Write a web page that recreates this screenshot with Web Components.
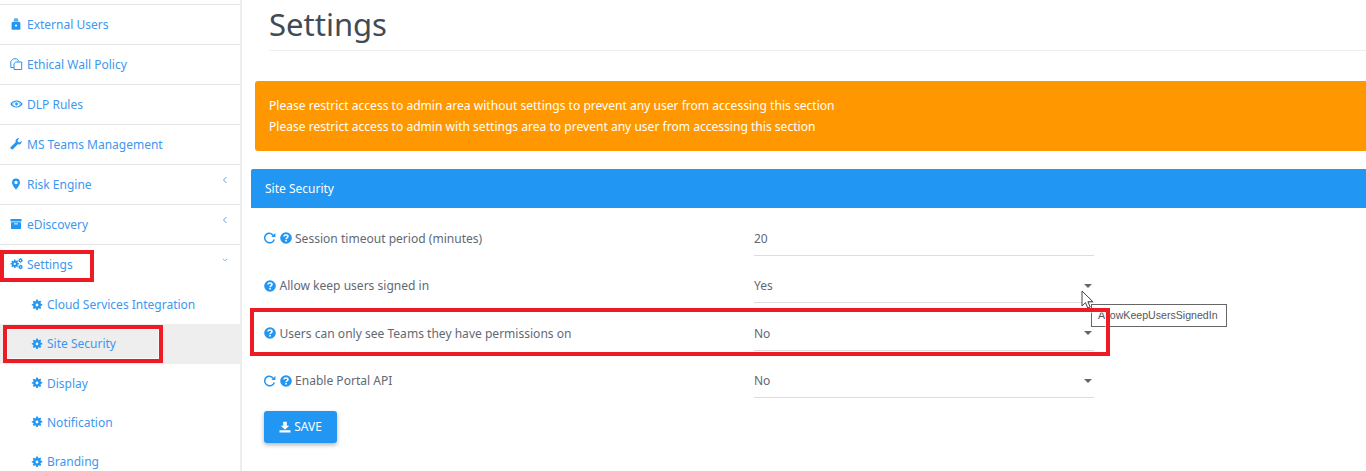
<!DOCTYPE html>
<html><head><meta charset="utf-8">
<style>
html,body{margin:0;padding:0;background:#fff}
body{width:1366px;height:471px;overflow:hidden;font-family:"Noto Sans","Open Sans",sans-serif;font-size:12px;position:relative}
</style></head><body>
<admin-page>
  <side-nav slot="nav">
    <nav-item icon="user">External Users</nav-item>
    <nav-item icon="copy">Ethical Wall Policy</nav-item>
    <nav-item icon="eye">DLP Rules</nav-item>
    <nav-item icon="wrench">MS Teams Management</nav-item>
    <nav-item icon="pin" chevron="left">Risk Engine</nav-item>
    <nav-item icon="archive" chevron="left">eDiscovery</nav-item>
    <nav-item icon="gears" chevron="down" open>Settings</nav-item>
    <nav-sub>Cloud Services Integration</nav-sub>
    <nav-sub active>Site Security</nav-sub>
    <nav-sub>Display</nav-sub>
    <nav-sub>Notification</nav-sub>
    <nav-sub>Branding</nav-sub>
  </side-nav>
  <page-title slot="main">Settings</page-title>
  <warn-box slot="main">
    <div>Please restrict access to admin area without settings to prevent any user from accessing this section</div>
    <div>Please restrict access to admin with settings area to prevent any user from accessing this section</div>
  </warn-box>
  <set-panel slot="main" heading="Site Security">
    <set-row reset value="20">Session timeout period (minutes)</set-row>
    <set-row select value="Yes">Allow keep users signed in</set-row>
    <set-row select value="No">Users can only see Teams they have permissions on</set-row>
    <set-row reset select value="No">Enable Portal API</set-row>
    <save-btn>SAVE</save-btn>
  </set-panel>
</admin-page>
<hover-tip>AllowKeepUsersSignedIn</hover-tip>
<red-box style="left:0;top:250px;width:94px;height:32px"></red-box>
<red-box style="left:3px;top:325px;width:160px;height:38px"></red-box>
<red-box style="left:250px;top:308px;width:860px;height:48px"></red-box>
<script>
const BLUE='#2196f3';
const GEAR='M7.800 .8h2.400l.4 2.100 1.300.5 1.800-1.200 1.700 1.700-1.200 1.800.5 1.300 2.100.4v2.400l-2.100.4-.5 1.300 1.200 1.800-1.700 1.700-1.800-1.200-1.300.5-.4 2.100H7.800l-.4-2.100-1.300-.5-1.800 1.200-1.700-1.700 1.200-1.800-.5-1.300-2.100-.4V7.800l2.100-.4.5-1.300-1.200-1.800 1.700-1.700 1.800 1.200 1.300-.5zM9 6.900a2.100 2.100 0 100 4.200 2.100 2.100 0 000-4.200z';
const ICONS={
 user:`<svg width="12" height="12" viewBox="0 0 12 12"><path fill="${BLUE}" d="M4 .4h4v1.300H4zM3.600 2.300h4.800v1.300H3.600zM1.600 5.200c0-.8.6-1.200 1.200-1.200h6.400c.6 0 1.200.4 1.200 1.200V11c0 .5-.3.8-.8.8H2.400c-.5 0-.8-.3-.8-.8z"/><circle cx="6" cy="7.600" r="1.100" fill="#fff"/></svg>`,
 copy:`<svg width="13" height="13" viewBox="0 0 13 13" fill="none" stroke="${BLUE}" stroke-width="1"><path d="M3.500.8h3.200l1.500 1.500v1.400M3.500.8L.8 3.500v6h3"/><path d="M5.800 4h5.900v7.500H4V5.600z"/></svg>`,
 eye:`<svg width="13" height="12" viewBox="0 0 13 12"><path fill="${BLUE}" fill-rule="evenodd" d="M.3 6C1.600 3.800 3.800 2.500 6.500 2.500S11.400 3.800 12.700 6C11.400 8.200 9.200 9.500 6.500 9.500S1.600 8.200.3 6zM6.500 3.400a2.600 2.600 0 100 5.200 2.600 2.600 0 000-5.200zM2.100 6c.8 1 1.500 1.600 2.300 2A3.400 3.400 0 014 4.100C3.200 4.500 2.700 5.100 2.100 6zM9 4.100A3.400 3.400 0 018.600 8c.8-.4 1.500-1 2.300-2-.6-.9-1.100-1.500-1.900-1.900z"/><circle cx="6.500" cy="6" r="1.400" fill="${BLUE}"/></svg>`,
 wrench:`<svg width="12" height="12" viewBox="0 0 12 12"><path fill="${BLUE}" d="M11.600 2.700c.2 1.400-.2 2.500-1.100 3.200-.8.600-1.800.7-2.700.4L3.200 11.100c-.6.600-1.500.6-2.100 0l-.2-.2c-.6-.6-.6-1.500 0-2.100l4.800-4.600c-.3-.9-.2-1.900.4-2.700C6.900.6 8 .2 9.300.4L7.500 2.300l.4 1.800 1.800.4z"/></svg>`,
 pin:`<svg width="12" height="12" viewBox="0 0 12 12"><path fill="${BLUE}" fill-rule="evenodd" d="M6 .5a3.900 3.900 0 00-3.900 3.900c0 2.300 2.700 5.800 3.900 7.200 1.200-1.400 3.900-4.900 3.900-7.200A3.900 3.900 0 006 .5zm0 2.300a1.700 1.700 0 110 3.400 1.700 1.700 0 010-3.400z"/></svg>`,
 archive:`<svg width="12" height="12" viewBox="0 0 12 12"><path fill="${BLUE}" d="M.5 1h11v2.500H.5zM1 4.200h10V11H1z"/><rect x="4.200" y="5.400" width="3.600" height="1" fill="#fff"/></svg>`,
 gears:`<svg width="14" height="12" viewBox="0 0 14 12"><g transform="translate(0 1.200) scale(.53)"><path fill="${BLUE}" fill-rule="evenodd" d="${GEAR}"/></g><g transform="translate(7.800 -.2) scale(.3)"><path fill="${BLUE}" fill-rule="evenodd" d="${GEAR}"/></g><g transform="translate(7.800 6.400) scale(.3)"><path fill="${BLUE}" fill-rule="evenodd" d="${GEAR}"/></g></svg>`,
 gear:`<svg width="12" height="12" viewBox="0 0 18 18"><path fill="${BLUE}" fill-rule="evenodd" d="${GEAR}"/></svg>`,
 help:`<svg width="12" height="12" viewBox="0 0 12 12"><circle cx="6" cy="6" r="5.800" fill="${BLUE}"/><path fill="none" stroke="#fff" stroke-width="1.500" d="M4 4.600C4 3.500 4.900 3 6 3s2 .6 2 1.600c0 1.300-2 1.300-2 2.600"/><rect x="5.200" y="8" width="1.600" height="1.500" fill="#fff"/></svg>`,
 reset:`<svg width="12" height="12" viewBox="0 0 12 12"><path fill="none" stroke="${BLUE}" stroke-width="1.500" d="M10.300 7.500A4.600 4.600 0 111 4.200a4.600 4.600 0 018.300-.6"/><path fill="${BLUE}" d="M11.400.9v4H7.400z"/></svg>`,
 save:`<svg width="12" height="12" viewBox="0 0 12 12"><path fill="#fff" d="M4.200.8h3.600v4h2.400L6 8.800 1.800 4.800h2.400zM.5 9.300h11v2.200H.5z"/></svg>`
};
function def(name,css,html,init){
  customElements.define(name,class extends HTMLElement{
    constructor(){super();this.attachShadow({mode:'open'})}
    connectedCallback(){this.shadowRoot.innerHTML=`<style>${css}</style>`+(typeof html==='function'?html(this):html);if(init)init(this)}
  });
}
def('admin-page',`:host{display:flex;width:1366px;height:471px;overflow:hidden}
.nav{flex:0 0 242px;display:block}.main{flex:1;min-width:0;display:flex;flex-direction:column}`,
`<div class="nav"><slot name="nav"></slot></div><div class="main"><slot name="main"></slot></div>`);
def('side-nav',`:host{display:flex;flex-direction:column;width:242px;height:471px;box-sizing:border-box;border-right:2px solid #eeeeee;padding-top:4px;overflow:hidden}`,`<slot></slot>`);
def('nav-item',`:host{display:flex;align-items:center;height:40px;box-sizing:border-box;flex:none;border-top:1px solid #e5e5e5;padding:0 11px 1px 10px;color:#3d97ef;font-size:12px}
:host([open]){height:41px;padding-bottom:2px}
.i{width:17px;display:flex;align-items:center;flex:none}.t{flex:1}
.c{width:6px;height:10px;display:flex;margin-top:-9px;margin-right:1px}`,
el=>{const ch=el.getAttribute('chevron');
 const c=ch==='left'?`<svg width="6" height="10" viewBox="0 0 6 10"><path d="M4.500 2L1.500 5l3 3" fill="none" stroke="#5aa6ef"/></svg>`:ch==='down'?`<svg width="8" height="10" viewBox="0 0 8 10"><path d="M1 3.500l3 2.500 3-2.500" fill="none" stroke="#5aa6ef"/></svg>`:'';
 return `<span class="i">${ICONS[el.getAttribute('icon')]}</span><span class="t"><slot></slot></span>${c?`<span class="c">${c}</span>`:''}`});
def('nav-sub',`:host{display:flex;align-items:center;height:39.250px;flex:none;box-sizing:border-box;padding-left:31px;color:#3d97ef;font-size:12px}
:host([active]){background:#eeeeee}.i{width:16px;display:flex;flex:none;margin-left:-.5px;margin-right:.5px}`,
()=>`<span class="i">${ICONS.gear}</span><slot></slot>`);
def('page-title',`:host{display:block;margin:0 0 30px 27px;height:51px;box-sizing:border-box;border-bottom:1px solid #eeeeee;flex:none}
h1{margin:0;font-weight:400;font-size:31px;line-height:48px;color:#414b55}`,`<h1><slot></slot></h1>`);
def('warn-box',`:host{display:block;margin:0 0 18px 13px;height:70px;box-sizing:border-box;flex:none;background:#ff9800;border-radius:3px 0 0 3px;padding:14px 14px;color:#fff;font-size:12.070px;line-height:21px}`,`<slot></slot>`);
def('set-panel',`:host{display:block;margin-left:9px;flex:none}
.h{height:39px;background:#2196f3;color:#fff;font-size:12px;line-height:39px;padding-left:14px;border-radius:2px 0 0 0;box-sizing:border-box}
.b{padding:7.900px 0 0 13px}`,el=>`<div class="h">${el.getAttribute('heading')}</div><div class="b"><slot></slot></div>`);
def('set-row',`:host{display:flex;height:47.500px;align-items:stretch;box-sizing:border-box;color:#5f6973;font-size:12.050px}
.l{flex:0 0 490px;display:flex;align-items:center;gap:3.500px;padding-bottom:2.700px;box-sizing:border-box;height:47px}
.ic{display:flex;gap:3.500px}.f{flex:0 0 340px;height:40px;box-sizing:border-box;border-bottom:1px solid #dddddd;display:flex;align-items:center;justify-content:space-between;padding:5.300px 0 0 0;color:#5f6973;font-size:12px}
.a{width:0;height:0;border-left:4.500px solid transparent;border-right:4.500px solid transparent;border-top:4.500px solid #666;margin-right:2px}`,
el=>`<div class="l"><span class="ic">${el.hasAttribute('reset')?ICONS.reset:''}${ICONS.help}</span><span><slot></slot></span></div><div class="f"><span>${el.getAttribute('value')}</span>${el.hasAttribute('select')?'<span class="a"></span>':''}</div>`);
def('save-btn',`:host{display:inline-flex;align-items:center;gap:3px;margin-top:5px;height:32px;width:73px;box-sizing:border-box;justify-content:center;background:#2196f3;color:#fff;font-size:12px;border-radius:3px;box-shadow:0 2px 4px rgba(0,0,0,.3)}`,
()=>`${ICONS.save}<slot></slot>`);
def('red-box',`:host{position:absolute;display:block;box-sizing:border-box;border:4px solid #ed1c24;box-shadow:inset 0 0 0 1px rgba(255,255,255,.6)}`,``);
def('hover-tip',`:host{position:absolute;left:1091px;top:304px;height:23px;width:136px;box-sizing:border-box;border:1px solid #666;background:#fff;color:#575757;font:10.600px "Liberation Sans",Arial,sans-serif;line-height:21px;padding-left:6px;white-space:nowrap;display:block;overflow:visible}
svg{position:absolute;left:-11px;top:-15px}`,
`<slot></slot><svg width="13" height="20" viewBox="0 0 13 20"><path d="M1 1v15l3.500-3.400 2.300 5.400 2.400-1-2.300-5.300h5z" fill="#fff" stroke="#444" stroke-width="1"/></svg>`);
</script>
</body></html>
